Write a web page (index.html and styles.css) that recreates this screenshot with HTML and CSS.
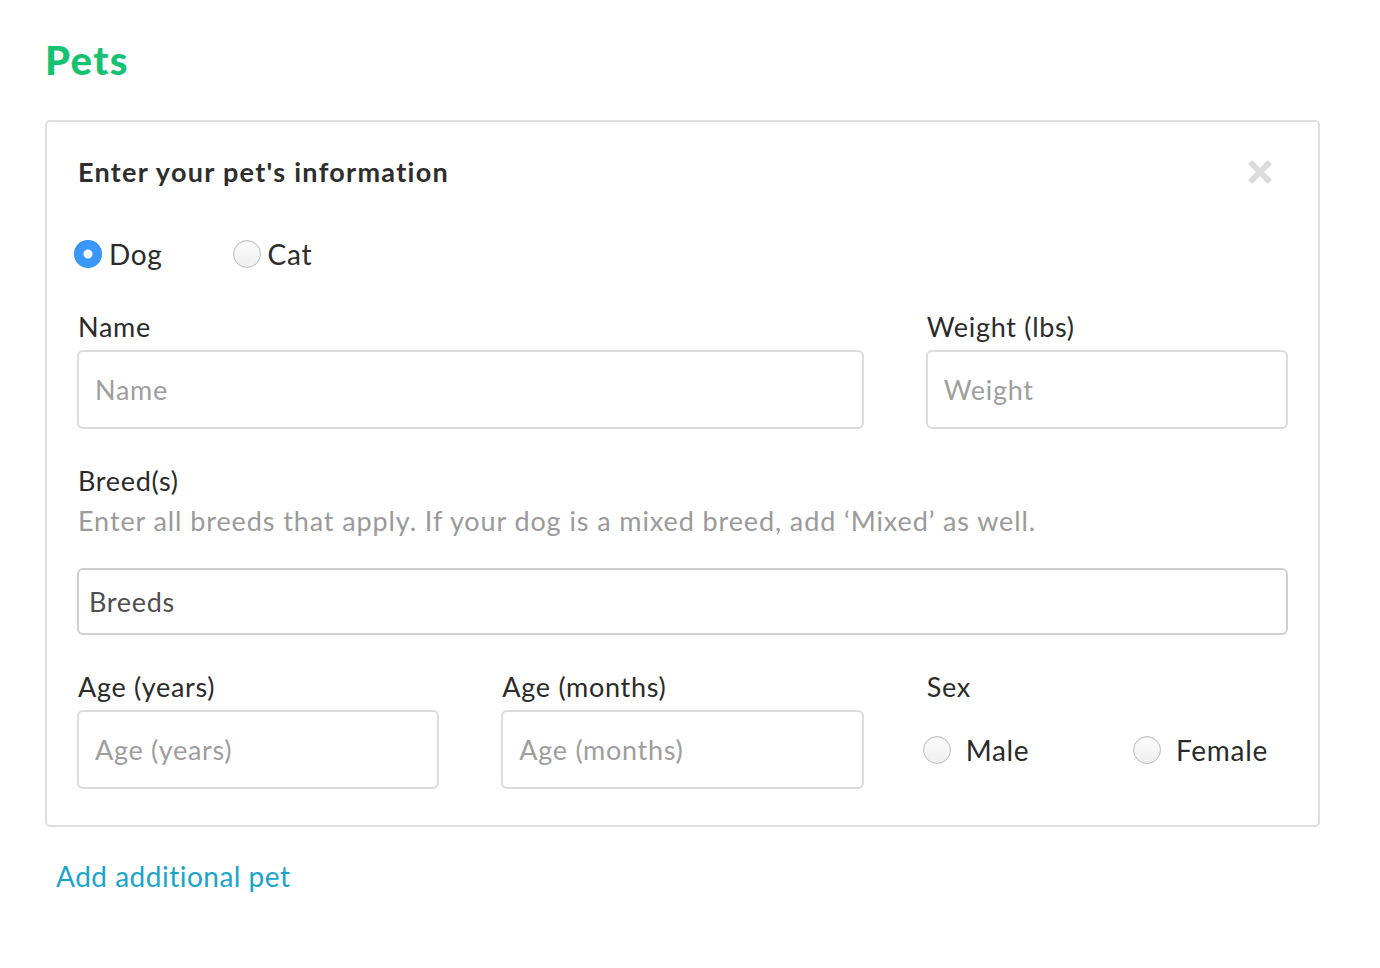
FILE: index.html
```html
<!DOCTYPE html>
<html lang="en">
<head>
    <meta charset="UTF-8">
    <meta name="viewport" content="width=device-width, initial-scale=1.0">
    <title>Pets</title>
    <link rel="stylesheet" href="styles.css">
</head>
<body>
    <h1 class="page-title">Pets</h1>

    <div class="pet-card">
        <div class="card-head">
            <h2>Enter your pet's information</h2>
            <button class="close-btn" aria-label="Remove">
                <svg width="28" height="28" viewBox="0 0 28 28">
                    <path d="M4 4 L24 24 M24 4 L4 24" stroke="#dcdcdc" stroke-width="6" stroke-linecap="butt"/>
                </svg>
            </button>
        </div>

        <div class="species">
            <label class="radio"><input type="radio" name="species" checked> Dog</label>
            <label class="radio"><input type="radio" name="species"> Cat</label>
        </div>

        <div class="grid">
            <div class="field span-2">
                <label for="name">Name</label>
                <input type="text" id="name" placeholder="Name">
            </div>
            <div class="field">
                <label for="weight">Weight (lbs)</label>
                <input type="text" id="weight" placeholder="Weight">
            </div>

            <div class="field span-3">
                <label for="breeds">Breed(s)</label>
                <p class="hint">Enter all breeds that apply. If your dog is a mixed breed, add ‘Mixed’ as well.</p>
                <input type="text" id="breeds" class="breeds" placeholder="Breeds">
            </div>

            <div class="field">
                <label for="years">Age (years)</label>
                <input type="text" id="years" placeholder="Age (years)">
            </div>
            <div class="field">
                <label for="months">Age (months)</label>
                <input type="text" id="months" placeholder="Age (months)">
            </div>
            <div class="field">
                <label>Sex</label>
                <div class="sex">
                    <label class="radio"><input type="radio" name="sex"> Male</label>
                    <label class="radio"><input type="radio" name="sex"> Female</label>
                </div>
            </div>
        </div>
    </div>

    <a href="#" class="add-pet">Add additional pet</a>
</body>
</html>
```

FILE: styles.css
```css
body {
    margin: 0;
    padding: 34px 60px 40px 45px;
    font-family: Lato, "Noto Sans", sans-serif;
    color: #333;
    background: #fff;
    letter-spacing: 0.7px;
}
.page-title {
    margin: 0 0 34px 0;
    font-size: 40px;
    font-weight: 900;
    color: #17c172;
    line-height: 52px;
    letter-spacing: 1.4px;
}
.pet-card {
    border: 2px solid #dedede;
    border-radius: 5px;
    padding: 33px 30px 36px 30px;
}
.card-head {
    display: flex;
    justify-content: space-between;
    align-items: center;
}
.card-head h2 {
    margin: 0 0 0 1px;
    font-size: 27px;
    font-weight: 700;
    color: #2e2e2e;
    letter-spacing: 1.3px;
}
.close-btn {
    border: none;
    background: none;
    padding: 0;
    margin: 0 14px 0 0;
    cursor: pointer;
}
.close-btn svg {
    display: block;
}
.species {
    display: flex;
    gap: 70px;
    margin: 49px 0 39px -3px;
}
.radio {
    display: flex;
    align-items: center;
    gap: 7px;
    font-size: 28px;
    color: #2b2b2b;
    cursor: pointer;
}
.radio input {
    appearance: none;
    -webkit-appearance: none;
    width: 28px;
    height: 28px;
    margin: 0;
    border-radius: 50%;
    border: 1px solid #bcbcbc;
    background: linear-gradient(#fdfdfd, #eeeeee);
    box-shadow: inset 0 1px 1px rgba(0, 0, 0, 0.08);
}
.radio input:checked {
    border: none;
    background: radial-gradient(circle, #fff 0 4px, #3a97fb 5px);
}
.grid {
    display: grid;
    grid-template-columns: repeat(3, 1fr);
    column-gap: 62px;
    row-gap: 35px;
}
.span-2 {
    grid-column: span 2;
}
.span-3 {
    grid-column: span 3;
}
.field > label {
    display: block;
    font-size: 27px;
    line-height: 34px;
    margin: 0 0 6px 1px;
    color: #2b2b2b;
}
.field input[type="text"] {
    box-sizing: border-box;
    width: 100%;
    height: 79px;
    padding: 0 16px;
    border: 2px solid #dcdcdc;
    border-radius: 6px;
    font-family: inherit;
    font-size: 27px;
    letter-spacing: 0.7px;
    color: #333;
    outline: none;
}
.field input::placeholder {
    color: #9e9e9e;
}
.field input.breeds {
    height: 67px;
    padding: 0 10px;
    border-color: #cfcfcf;
}
.field input.breeds::placeholder {
    color: #4f4f4f;
}
.hint {
    margin: 6px 0 31px 1px;
    font-size: 27px;
    color: #9a9a9a;
    letter-spacing: 0.9px;
}
.sex {
    display: flex;
    justify-content: space-between;
    align-items: center;
    height: 79px;
    margin-left: -3px;
    padding-right: 20px;
}
.sex .radio {
    gap: 15px;
}
.add-pet {
    display: inline-block;
    margin: 32px 0 0 11px;
    font-size: 28px;
    color: #1ba4c9;
    text-decoration: none;
    letter-spacing: 0.5px;
}
```
